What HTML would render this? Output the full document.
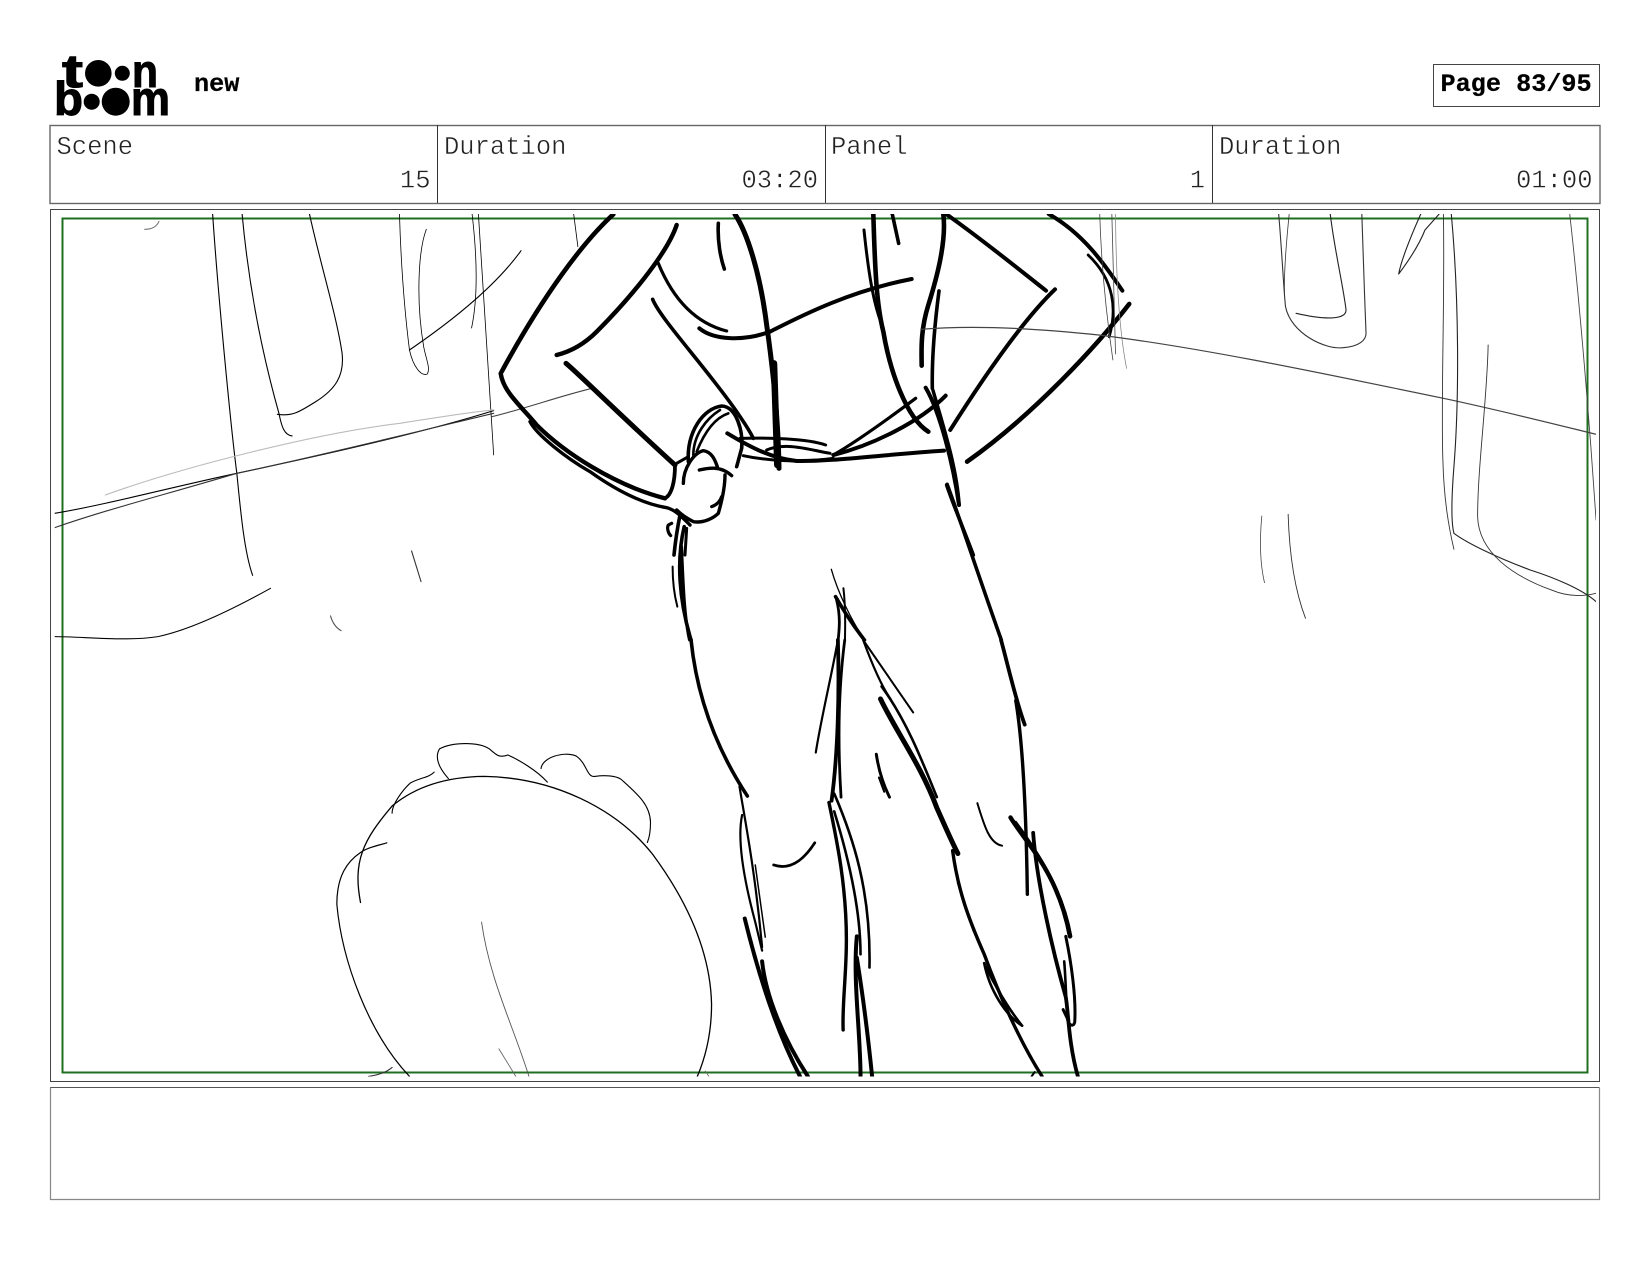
<!DOCTYPE html>
<html lang="en">
<head>
<meta charset="utf-8">
<title>Storyboard page 83</title>
<style>
html,body{margin:0;padding:0;background:#fff;width:1650px;height:1275px;overflow:hidden}
svg{display:block}
text{font-family:"Liberation Mono",monospace}
.l{font-size:25.5px;fill:#222;stroke:#fff;stroke-width:.45}
.b{font-size:25.2px;font-weight:bold;fill:#000;stroke:#000;stroke-width:.25}
.logo{font-family:"Liberation Sans",sans-serif;font-weight:bold;fill:#000;stroke:#000;stroke-width:1}
#art path{fill:none;stroke:#000;stroke-width:1.1;stroke-linecap:round;stroke-linejoin:round;vector-effect:non-scaling-stroke}
</style>
</head>
<body>
<svg width="1650" height="1275" viewBox="0 0 1650 1275" xmlns="http://www.w3.org/2000/svg">
<defs><clipPath id="c"><rect x="54.7" y="214" width="1541.3" height="862.5"/></clipPath></defs>
<rect width="1650" height="1275" fill="#fff"/>

<!-- logo -->
<text class="logo" x="62" y="87" font-size="46" textLength="21" lengthAdjust="spacingAndGlyphs">t</text>
<circle cx="98.3" cy="73.3" r="13.3"/>
<circle cx="122.3" cy="73.3" r="7.5"/>
<text class="logo" x="132" y="87" font-size="46" textLength="26" lengthAdjust="spacingAndGlyphs">n</text>
<text class="logo" x="54" y="115" font-size="47" textLength="29" lengthAdjust="spacingAndGlyphs">b</text>
<circle cx="91.7" cy="101.7" r="8"/>
<circle cx="115.7" cy="101.7" r="14"/>
<text class="logo" x="131" y="115" font-size="48" textLength="39" lengthAdjust="spacingAndGlyphs">m</text>

<text class="b" x="194" y="91">new</text>
<rect x="1433.5" y="64.5" width="166" height="42" fill="none" stroke="#444" stroke-width="1"/>
<text class="b" x="1440.5" y="91">Page 83/95</text>

<!-- header table -->
<rect x="50" y="125.5" width="1550" height="78" fill="none" stroke="#666" stroke-width="1.4"/>
<path d="M437.5 125V203M825.5 125V203M1212.5 125V203" stroke="#333" stroke-width="1" fill="none"/>
<text class="l" x="56.5" y="154">Scene</text>
<text class="l" x="430.5" y="187.5" text-anchor="end">15</text>
<text class="l" x="444" y="154">Duration</text>
<text class="l" x="818" y="187.5" text-anchor="end">03:20</text>
<text class="l" x="831" y="154">Panel</text>
<text class="l" x="1205" y="187.5" text-anchor="end">1</text>
<text class="l" x="1219" y="154">Duration</text>
<text class="l" x="1592.5" y="187.5" text-anchor="end">01:00</text>

<!-- panel frame -->
<rect x="50.5" y="209.5" width="1549" height="872" fill="none" stroke="#444" stroke-width="1"/>
<rect x="62.5" y="218.5" width="1525" height="854" fill="none" stroke="#1f6f22" stroke-width="2"/>

<g id="art" clip-path="url(#c)">
<!-- upper-left background -->
<g transform="translate(0,200) scale(.5263,.3333)">
<path d="M404 42C415 300 440 700 450 820C458 950 465 1060 480 1126"/>
<path d="M460 42C475 300 505 500 530 640C535 680 540 705 555 708"/>
<path d="M588 42C610 200 640 350 650 460C655 530 635 570 600 605C570 635 555 650 527 643"/>
<path style="stroke-width:.8" d="M759 42C762 200 770 350 778 450C785 500 800 530 812 522C818 505 810 480 805 440C790 300 795 150 810 88"/>
<path style="stroke-width:.8" d="M897 42C905 150 910 280 896 384"/>
<path style="stroke-width:.8" d="M909 42C920 300 930 550 938 765"/>
<path style="stroke-width:.8" d="M1090 42L1098 140"/>
<path d="M990 152C950 240 880 340 778 450"/>
<path style="stroke:#777" d="M302 64C298 80 290 88 275 88"/>
<path d="M104 940C200 915 330 860 450 820C600 770 800 700 938 632"/>
<path style="stroke:#333" d="M104 983C200 930 300 890 450 820C600 770 780 700 938 640"/>
<path style="stroke:#bbb" d="M200 885C350 800 600 700 760 670C840 650 900 635 938 630"/>
<path style="stroke:#444" d="M935 650C1000 625 1060 590 1125 565"/>
<path style="stroke:#333" d="M782 1053L800 1145"/>
<path style="stroke:#555" d="M628 1248C632 1270 640 1285 648 1292"/>
<path d="M514 1165C440 1230 360 1290 300 1310C240 1325 160 1310 104 1310"/>
<path style="stroke-width:3.6" d="M1300 980C1285 1080 1290 1200 1313 1320"/>
<path style="stroke-width:3" d="M1295 1040C1298 1150 1300 1250 1310 1320"/>
<path style="stroke-width:2" d="M1278 1100C1278 1150 1282 1190 1287 1220"/>
</g>

<!-- figure torso -->
<g transform="translate(480,205) scale(.33333)">
<path style="stroke-width:4.6" d="M400 28C310 110 190 270 65 500"/>
<path style="stroke-width:4.4" d="M62 505C70 560 120 600 170 660C250 740 400 840 555 880"/>
<path style="stroke-width:3.4" d="M150 650C170 690 260 760 330 800C400 850 480 895 560 908C585 915 600 930 630 960"/>
<path style="stroke-width:3.8" d="M555 880C575 870 585 830 585 780"/>
<path style="stroke-width:4.4" d="M590 60C560 150 440 290 350 380C310 420 270 440 230 450"/>
<path style="stroke-width:5" d="M258 475C300 510 420 630 585 780"/>
<path style="stroke-width:3.2" d="M535 175C570 260 630 350 740 378"/>
<path style="stroke-width:3.6" d="M518 283C540 340 680 490 770 620C790 650 805 670 820 700"/>
<path style="stroke-width:4" d="M658 370C700 405 790 410 870 380C950 340 1100 260 1295 222"/>
<path style="stroke-width:5" d="M765 28C800 80 840 200 860 360C880 500 895 650 897 790"/>
<path style="stroke-width:6.5" d="M882 475L892 780"/>
<path style="stroke-width:3.6" d="M715 55C712 110 722 160 733 192"/>
<path style="stroke-width:4.6" d="M1180 28C1185 200 1190 300 1210 380C1230 500 1280 640 1345 680"/>
<path style="stroke-width:3" d="M1152 75C1165 200 1180 300 1210 370"/>
<path style="stroke-width:3.6" d="M1237 28L1256 115"/>
<path style="stroke-width:4.6" d="M1390 28C1400 110 1370 220 1345 300C1320 380 1325 440 1325 482"/>
<path style="stroke-width:3.6" d="M1377 258C1365 350 1355 450 1357 550"/>
<path style="stroke-width:4" d="M1337 548C1380 620 1420 780 1437 900"/>
<path style="stroke-width:3.6" d="M1400 840C1420 900 1450 970 1480 1050"/>
<path style="stroke-width:4" d="M742 685C800 720 870 760 950 768C1050 770 1200 750 1392 737"/>
<path style="stroke-width:3" d="M780 700C860 698 980 700 1037 720"/>
<path style="stroke-width:3" d="M790 752C850 765 950 775 1060 760"/>
<path style="stroke-width:3" d="M860 735C920 710 990 735 1050 745"/>
<path style="stroke-width:3.2" d="M1307 580C1240 630 1130 710 1060 750"/>
<path style="stroke-width:4" d="M1397 572C1320 650 1180 720 1060 750"/>
<path style="stroke-width:3.6" d="M625 770C620 680 670 610 725 603C770 605 790 680 785 730L770 785"/>
<path style="stroke-width:2.6" d="M640 750C640 690 680 640 720 615"/>
<path style="stroke-width:2.6" d="M650 740C670 690 700 640 745 625"/>
<path style="stroke-width:3.4" d="M610 835C610 790 640 745 670 737C695 740 705 765 712 785"/>
<path style="stroke-width:3.4" d="M658 795C680 790 720 780 755 812"/>
<path style="stroke-width:3.4" d="M735 810C735 850 725 890 715 925C700 940 670 955 640 950C620 940 600 925 590 915"/>
<path style="stroke-width:3.2" d="M695 905C710 900 720 890 725 875"/>
<path style="stroke-width:3" d="M590 775L625 755"/>
<path style="stroke-width:3.2" d="M575 955L565 960C560 970 565 985 572 992"/>
<path style="stroke-width:3.6" d="M600 930C590 980 585 1020 582 1050"/>
<path style="stroke-width:3" d="M620 970L615 1050"/>
</g>

<!-- right side -->
<g transform="translate(825,200) scale(.5263,.3333)">
<path style="stroke-width:4" d="M230 42C300 120 370 210 420 272"/>
<path style="stroke-width:4" d="M437 268C370 370 290 560 238 690"/>
<path style="stroke-width:4" d="M425 42C490 100 530 190 565 272"/>
<path style="stroke-width:2.8" d="M500 165C550 240 555 330 540 410"/>
<path style="stroke-width:4.6" d="M578 312C520 430 400 640 270 785"/>
<path style="stroke-width:3.6" d="M232 853C255 950 290 1120 335 1320"/>
<path style="stroke-width:3.4" d="M205 570C225 680 250 800 255 915"/>
<path style="stroke-width:3.6" d="M20 1190C35 1230 50 1270 75 1320"/>
<path style="stroke-width:2.8" d="M22 1200C30 1250 27 1290 25 1320"/>
<path style="stroke-width:2" d="M35 1165C40 1230 38 1280 38 1320"/>
<path style="stroke-width:1.3" d="M12 1108C25 1180 50 1260 75 1320"/>
<path style="stroke-width:.8;stroke:#444" d="M522 42C525 200 535 350 547 480"/>
<path style="stroke-width:.8;stroke:#444" d="M545 42L552 462"/>
<path style="stroke-width:.8;stroke:#888" d="M552 42C553 250 560 400 573 505"/>
<path style="stroke:#444;stroke-width:1.2" d="M182 388C280 375 400 385 520 405C700 440 900 505 1175 595C1280 630 1380 670 1465 703"/>
<path style="stroke:#333" d="M862 42C868 150 872 280 875 320C885 400 950 450 985 443C1015 440 1028 420 1028 400C1025 280 1022 150 1020 42"/>
<path style="stroke:#333;stroke-width:.8" d="M882 42C875 150 872 220 873 280"/>
<path style="stroke:#222" d="M960 42C968 150 985 260 990 330C990 360 950 360 895 340"/>
<path style="stroke:#222" d="M1132 42C1110 120 1095 180 1090 222C1110 180 1130 130 1140 90L1167 42"/>
<path style="stroke:#333;stroke-width:.9" d="M1175 42C1178 300 1170 600 1174 780C1176 900 1185 980 1195 1048"/>
<path style="stroke:#222" d="M1190 42C1205 300 1205 600 1195 800C1190 900 1190 970 1195 1000C1220 1030 1280 1075 1340 1110C1390 1135 1440 1170 1465 1205"/>
<path style="stroke:#333;stroke-width:.9" d="M1260 435C1258 600 1240 800 1240 950C1242 1060 1310 1130 1380 1170C1410 1190 1440 1190 1465 1180"/>
<path style="stroke:#444;stroke-width:.9" d="M1415 42C1430 250 1450 600 1465 960"/>
<path style="stroke:#444;stroke-width:.8" d="M830 948C825 1030 828 1100 835 1148"/>
<path style="stroke:#333;stroke-width:.9" d="M880 943C882 1050 890 1160 913 1255"/>
</g>

<!-- round foreground shape -->
<g transform="translate(0,640) scale(.5263,.3571)">
<path style="stroke-width:1.2" d="M778 1222C700 1100 650 900 640 740C640 660 660 620 685 595C700 580 720 575 735 568"/>
<path style="stroke-width:1.3" d="M685 735C670 620 690 560 745 465C790 410 850 383 920 382C1050 385 1170 470 1240 600C1310 740 1350 880 1352 1020C1352 1100 1340 1170 1325 1222"/>
<path d="M745 485C745 460 765 420 780 400C800 385 815 385 825 370"/>
<path d="M852 388C835 360 825 330 835 305C860 285 910 285 930 305C945 325 950 330 965 322C985 335 1020 365 1040 398"/>
<path d="M1028 360C1030 330 1070 310 1095 325C1115 345 1115 385 1130 382C1150 378 1170 380 1180 390C1210 430 1235 460 1236 510C1236 540 1232 560 1230 567"/>
<path style="stroke:#555;stroke-width:.9" d="M915 790C930 950 975 1080 1005 1222"/>
<path style="stroke:#666;stroke-width:.9" d="M948 1145L980 1222"/>
<path style="stroke:#333" d="M700 1222C720 1218 735 1210 745 1197"/>
<path style="stroke:#666;stroke-width:.8" d="M1340 1207L1347 1222"/>
</g>

<!-- legs -->
<g transform="translate(700,640) scale(.5263,.3571)">
<path style="stroke-width:3.6" d="M-17 0C-8 130 20 280 90 437"/>
<path style="stroke-width:2.2" d="M75 410C85 500 105 650 118 860"/>
<path style="stroke-width:2.2" d="M80 490C70 560 85 680 105 790L118 870"/>
<path style="stroke-width:1.5" d="M105 630L124 832"/>
<path style="stroke-width:4" d="M85 780C105 900 140 1080 190 1222"/>
<path style="stroke-width:4" d="M118 900C125 1000 160 1120 205 1222"/>
<path style="stroke-width:2.8" d="M140 630C170 645 195 620 218 568"/>
<path style="stroke-width:3.8" d="M262 0C265 150 262 320 250 450"/>
<path style="stroke-width:2.8" d="M275 0C262 150 262 300 268 440"/>
<path style="stroke-width:2.2" d="M262 0C250 100 230 220 220 315"/>
<path style="stroke-width:3.4" d="M245 455C260 560 280 700 278 860C277 950 270 1030 272 1092"/>
<path style="stroke-width:2.6" d="M255 430C290 550 325 700 322 917"/>
<path style="stroke-width:2.6" d="M255 480C280 600 305 750 305 880"/>
<path style="stroke-width:4" d="M298 830C290 950 305 1100 305 1222"/>
<path style="stroke-width:4" d="M298 890C310 1000 320 1120 327 1222"/>
<path style="stroke-width:2" d="M310 0L405 203"/>
<path style="stroke-width:2.2" d="M310 0C325 60 345 130 362 165"/>
<path style="stroke-width:5" d="M343 165C370 250 420 350 450 470C465 520 480 570 490 598"/>
<path style="stroke-width:2.6" d="M345 130C390 220 420 330 450 440"/>
<path style="stroke-width:3" d="M335 320C340 370 350 410 360 440"/>
<path style="stroke-width:2" d="M340 385L350 425"/>
<path style="stroke-width:3.8" d="M572 0C585 70 600 170 617 237"/>
<path style="stroke-width:3.4" d="M600 170C615 300 620 500 622 712"/>
<path style="stroke-width:2" d="M527 457C540 520 550 570 574 576"/>
<path style="stroke-width:4.4" d="M590 497C620 570 680 650 703 830"/>
<path style="stroke-width:2.6" d="M600 510C640 590 690 700 705 830"/>
<path style="stroke-width:3.8" d="M633 540C640 680 670 870 695 1000C700 1040 700 1130 718 1222"/>
<path style="stroke-width:3" d="M695 830C705 900 715 1000 712 1070C710 1085 700 1080 698 1060L690 1035"/>
<path style="stroke-width:2.6" d="M692 900C695 950 695 1000 698 1040"/>
<path style="stroke-width:3.4" d="M480 590C490 700 510 780 540 880C570 1000 610 1130 650 1222"/>
<path style="stroke-width:2.2" d="M490 680L520 815"/>
<path style="stroke-width:2.6" d="M540 905C550 980 580 1050 612 1080"/>
<path style="stroke-width:2.6" d="M540 905C560 970 590 1040 612 1080"/>
<path style="stroke-width:2" d="M630 1222L636 1210"/>
</g>
</g>

<!-- notes box -->
<path d="M50.5 1199.5V1087.5H1599.5" fill="none" stroke="#555" stroke-width="1"/>
<path d="M50.5 1087.5V1199.5H1599.5V1087.5" fill="none" stroke="#888" stroke-width="1.2"/>
</svg>
</body>
</html>
